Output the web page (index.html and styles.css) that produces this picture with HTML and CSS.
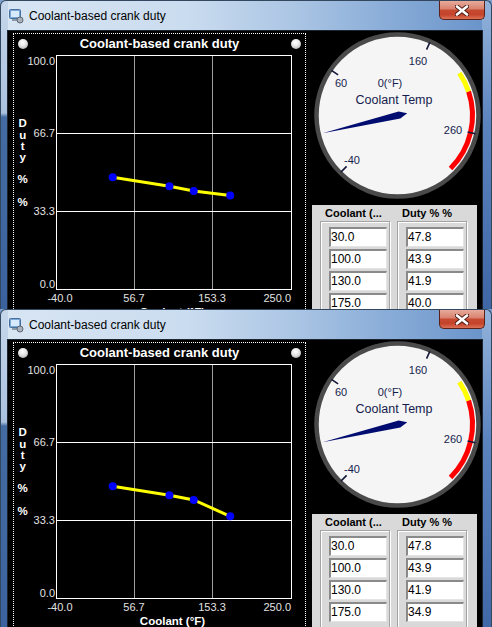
FILE: index.html
```html
<!DOCTYPE html>
<html>
<head>
<meta charset="utf-8">
<link rel="stylesheet" href="styles.css">
</head>
<body>
<div class="window w1">
  <div class="titlebar">
    <svg class="app-icon" width="16" height="16" viewBox="0 0 16 16">
      <rect x="1.5" y="1.5" width="11" height="9" rx="1" fill="#7aa6d8" stroke="#48709f"/>
      <rect x="3" y="3" width="8" height="6" fill="#d6eafc"/>
      <rect x="4" y="11" width="6" height="2" fill="#8c9aa8"/>
      <circle cx="12" cy="12" r="3" fill="#a9b2bc" stroke="#5f6872"/>
    </svg>
    <span class="title">Coolant-based crank duty</span>
    <div class="close">
      <svg width="14" height="11" viewBox="0 0 14 11">
        <path d="M2 1.5L12 9.5M12 1.5L2 9.5" stroke="#4a1a14" stroke-width="4.4" stroke-linecap="round"/>
        <path d="M2 1.5L12 9.5M12 1.5L2 9.5" stroke="#fff" stroke-width="2.6" stroke-linecap="round"/>
      </svg>
    </div>
  </div>
  <div class="client">
    <div class="panel">
      <div class="phead"><span class="knob"></span><span class="ctitle">Coolant-based crank duty</span><span class="knob"></span></div>
      <svg class="plot" width="290" height="280" viewBox="0 0 290 280">
        <line x1="120.5" y1="1" x2="120.5" y2="236" class="vgrid"/>
        <line x1="198.5" y1="1" x2="198.5" y2="236" class="vgrid"/>
        <line x1="42" y1="79.5" x2="278" y2="79.5" class="hgrid"/>
        <line x1="42" y1="157.5" x2="278" y2="157.5" class="hgrid"/>
        <rect x="42.5" y="1.5" width="235" height="234" class="frame"/>
        <text x="41" y="10.7" class="tick" text-anchor="end">100.0</text>
        <text x="41" y="83.3" class="tick" text-anchor="end">66.7</text>
        <text x="41" y="161.3" class="tick" text-anchor="end">33.3</text>
        <text x="41" y="234.3" class="tick" text-anchor="end">0.0</text>
        <text x="46" y="248" class="tick" text-anchor="middle">-40.0</text>
        <text x="120" y="248" class="tick" text-anchor="middle">56.7</text>
        <text x="198" y="248" class="tick" text-anchor="middle">153.3</text>
        <text x="277" y="248" class="tick" text-anchor="end">250.0</text>
        <text x="158.5" y="261.6" class="axis" text-anchor="middle">Coolant (°F)</text>
        <text x="8.7" y="73.3" class="axis" text-anchor="middle">D</text>
        <text x="8.7" y="84.5" class="axis" text-anchor="middle">u</text>
        <text x="8.7" y="95.7" class="axis" text-anchor="middle">t</text>
        <text x="8.7" y="106.9" class="axis" text-anchor="middle">y</text>
        <text x="8.7" y="129.3" class="axis" text-anchor="middle">%</text>
        <text x="8.7" y="151.7" class="axis" text-anchor="middle">%</text>
        <polyline points="98.72,123.15 155.45,132.27 179.76,136.95 216.22,141.4" class="curve"/>
        <circle cx="98.72" cy="123.15" r="4" class="pt"/>
        <circle cx="155.45" cy="132.27" r="4" class="pt"/>
        <circle cx="179.76" cy="136.95" r="4" class="pt"/>
        <circle cx="216.22" cy="141.4" r="4" class="pt"/>
      </svg>
    </div>
    <div class="side">
      <svg class="gauge" width="176" height="170" viewBox="0 0 176 170">
        <circle cx="91.5" cy="84.5" r="81" class="dial"/>
        <path d="M153.38 42.12A75 75 0 0 1 162.62 60.66" class="band-y"/>
        <path d="M162.62 60.66A75 75 0 0 1 144.53 137.53" class="band-r"/>
        <line x1="40.59" y1="135.41" x2="34.93" y2="141.07" class="gtick"/>
        <line x1="32.09" y1="43.82" x2="25.49" y2="39.3" class="gtick"/>
        <line x1="120.58" y1="18.63" x2="123.81" y2="11.32" class="gtick"/>
        <line x1="161.58" y1="100.99" x2="169.37" y2="102.82" class="gtick"/>
        <text x="112" y="34" class="glabel" text-anchor="middle">160</text>
        <text x="35" y="56" class="glabel" text-anchor="middle">60</text>
        <text x="147" y="103" class="glabel" text-anchor="middle">260</text>
        <text x="46" y="133" class="glabel" text-anchor="middle">-40</text>
        <text x="84" y="56" class="glabel" text-anchor="middle">0(°F)</text>
        <text x="88" y="72.5" class="gname" text-anchor="middle">Coolant Temp</text>
        <polygon points="16.55,102.13 92.6,80.6 101.23,82.21 94.3,87.5" class="needle"/>
      </svg>
      <div class="table">
        <div class="thead"><span>Coolant (...</span><span>Duty % %</span></div>
        <div class="cols">
          <div class="col">
            <div class="cell">30.0</div>
            <div class="cell">100.0</div>
            <div class="cell">130.0</div>
            <div class="cell">175.0</div>
          </div>
          <div class="col">
            <div class="cell">47.8</div>
            <div class="cell">43.9</div>
            <div class="cell">41.9</div>
            <div class="cell">40.0</div>
          </div>
        </div>
      </div>
    </div>
  </div>
</div>
<div class="window w2">
  <div class="titlebar">
    <svg class="app-icon" width="16" height="16" viewBox="0 0 16 16">
      <rect x="1.5" y="1.5" width="11" height="9" rx="1" fill="#7aa6d8" stroke="#48709f"/>
      <rect x="3" y="3" width="8" height="6" fill="#d6eafc"/>
      <rect x="4" y="11" width="6" height="2" fill="#8c9aa8"/>
      <circle cx="12" cy="12" r="3" fill="#a9b2bc" stroke="#5f6872"/>
    </svg>
    <span class="title">Coolant-based crank duty</span>
    <div class="close">
      <svg width="14" height="11" viewBox="0 0 14 11">
        <path d="M2 1.5L12 9.5M12 1.5L2 9.5" stroke="#4a1a14" stroke-width="4.4" stroke-linecap="round"/>
        <path d="M2 1.5L12 9.5M12 1.5L2 9.5" stroke="#fff" stroke-width="2.6" stroke-linecap="round"/>
      </svg>
    </div>
  </div>
  <div class="client">
    <div class="panel">
      <div class="phead"><span class="knob"></span><span class="ctitle">Coolant-based crank duty</span><span class="knob"></span></div>
      <svg class="plot" width="290" height="280" viewBox="0 0 290 280">
        <line x1="120.5" y1="1" x2="120.5" y2="236" class="vgrid"/>
        <line x1="198.5" y1="1" x2="198.5" y2="236" class="vgrid"/>
        <line x1="42" y1="79.5" x2="278" y2="79.5" class="hgrid"/>
        <line x1="42" y1="157.5" x2="278" y2="157.5" class="hgrid"/>
        <rect x="42.5" y="1.5" width="235" height="234" class="frame"/>
        <text x="41" y="10.7" class="tick" text-anchor="end">100.0</text>
        <text x="41" y="83.3" class="tick" text-anchor="end">66.7</text>
        <text x="41" y="161.3" class="tick" text-anchor="end">33.3</text>
        <text x="41" y="234.3" class="tick" text-anchor="end">0.0</text>
        <text x="46" y="248" class="tick" text-anchor="middle">-40.0</text>
        <text x="120" y="248" class="tick" text-anchor="middle">56.7</text>
        <text x="198" y="248" class="tick" text-anchor="middle">153.3</text>
        <text x="277" y="248" class="tick" text-anchor="end">250.0</text>
        <text x="158.5" y="261.6" class="axis" text-anchor="middle">Coolant (°F)</text>
        <text x="8.7" y="73.3" class="axis" text-anchor="middle">D</text>
        <text x="8.7" y="84.5" class="axis" text-anchor="middle">u</text>
        <text x="8.7" y="95.7" class="axis" text-anchor="middle">t</text>
        <text x="8.7" y="106.9" class="axis" text-anchor="middle">y</text>
        <text x="8.7" y="129.3" class="axis" text-anchor="middle">%</text>
        <text x="8.7" y="151.7" class="axis" text-anchor="middle">%</text>
        <polyline points="98.72,123.15 155.45,132.27 179.76,136.95 216.22,153.33" class="curve"/>
        <circle cx="98.72" cy="123.15" r="4" class="pt"/>
        <circle cx="155.45" cy="132.27" r="4" class="pt"/>
        <circle cx="179.76" cy="136.95" r="4" class="pt"/>
        <circle cx="216.22" cy="153.33" r="4" class="pt"/>
      </svg>
    </div>
    <div class="side">
      <svg class="gauge" width="176" height="170" viewBox="0 0 176 170">
        <circle cx="91.5" cy="84.5" r="81" class="dial"/>
        <path d="M153.38 42.12A75 75 0 0 1 162.62 60.66" class="band-y"/>
        <path d="M162.62 60.66A75 75 0 0 1 144.53 137.53" class="band-r"/>
        <line x1="40.59" y1="135.41" x2="34.93" y2="141.07" class="gtick"/>
        <line x1="32.09" y1="43.82" x2="25.49" y2="39.3" class="gtick"/>
        <line x1="120.58" y1="18.63" x2="123.81" y2="11.32" class="gtick"/>
        <line x1="161.58" y1="100.99" x2="169.37" y2="102.82" class="gtick"/>
        <text x="112" y="34" class="glabel" text-anchor="middle">160</text>
        <text x="35" y="56" class="glabel" text-anchor="middle">60</text>
        <text x="147" y="103" class="glabel" text-anchor="middle">260</text>
        <text x="46" y="133" class="glabel" text-anchor="middle">-40</text>
        <text x="84" y="56" class="glabel" text-anchor="middle">0(°F)</text>
        <text x="88" y="72.5" class="gname" text-anchor="middle">Coolant Temp</text>
        <polygon points="16.55,102.13 92.6,80.6 101.23,82.21 94.3,87.5" class="needle"/>
      </svg>
      <div class="table">
        <div class="thead"><span>Coolant (...</span><span>Duty % %</span></div>
        <div class="cols">
          <div class="col">
            <div class="cell">30.0</div>
            <div class="cell">100.0</div>
            <div class="cell">130.0</div>
            <div class="cell">175.0</div>
          </div>
          <div class="col">
            <div class="cell">47.8</div>
            <div class="cell">43.9</div>
            <div class="cell">41.9</div>
            <div class="cell">34.9</div>
          </div>
        </div>
      </div>
    </div>
  </div>
</div>
</body>
</html>
```
FILE: styles.css
```css
* { box-sizing: border-box; margin: 0; padding: 0; }
html, body { width: 492px; height: 627px; overflow: hidden; }
body { font-family: "Liberation Sans", Arial, sans-serif; background: #7b9fcf; }

.window {
  width: 492px;
  border: 1px solid #33475f;
  border-bottom: none;
  border-radius: 6px 6px 0 0;
  overflow: hidden;
  display: flex;
  flex-direction: column;
  background:
    linear-gradient(180deg, #c6d7eb 0, #aac1de 112px, #446ca3 116px, #3a629d 100%) 0 0 / 7px 100% no-repeat,
    linear-gradient(180deg, #93b3db 0, #5b83be 40%, #3f67a6 100%) 100% 0 / 9px 100% no-repeat,
    linear-gradient(90deg, #d8e5f3 0%, #cadcef 38%, #abc5e4 60%, #87abd7 80%, #6892c9 100%);
}
.w1 { height: 309px; }
.w2 { height: 330px; }

.titlebar {
  height: 29px;
  flex: none;
  display: flex;
  align-items: center;
  padding-left: 7px;
}
.app-icon { flex: none; }
.title {
  flex: 1;
  margin-left: 5px;
  font-size: 12px;
  color: #000;
  padding-top: 1px;
}
.close {
  align-self: flex-start;
  flex: none;
  width: 46px;
  height: 19px;
  margin-right: 6px;
  border: 1px solid #5b2018;
  border-top: none;
  border-radius: 0 0 5px 5px;
  background: linear-gradient(180deg, #e8aa9b 0%, #d98470 42%, #c64a30 52%, #c4432a 75%, #dc7156 100%);
  display: flex;
  align-items: center;
  justify-content: center;
}

.client {
  flex: 1;
  margin: 0 8px 0 6px;
  background: #000;
  border: 1px solid #1c2530;
  border-bottom: none;
  display: flex;
  overflow: hidden;
}

.panel {
  flex: none;
  width: 293px;
  height: 300px;
  margin: 2px 0 0 5px;
  border: 1px dotted #fff;
}
.phead {
  height: 19px;
  display: flex;
  align-items: center;
  padding: 0 4px 0 4px;
}
.knob {
  flex: none;
  width: 10px;
  height: 10px;
  border-radius: 50%;
  background: radial-gradient(circle at 45% 35%, #ffffff 0, #e8e8e8 40%, #9c9c9c 100%);
}
.ctitle {
  flex: 1;
  text-align: center;
  color: #fff;
  font-weight: bold;
  font-size: 13px;
}
.plot { display: block; margin-top: 1px; }
.vgrid { stroke: #a0a0a0; stroke-width: 1; }
.hgrid { stroke: #ffffff; stroke-width: 1; }
.frame { fill: none; stroke: #ffffff; stroke-width: 1; }
.tick { fill: #e2e2e2; font-size: 11px; font-family: "Liberation Sans", Arial, sans-serif; }
.axis { fill: #ffffff; font-size: 11.5px; font-weight: bold; font-family: "Liberation Sans", Arial, sans-serif; }
.curve { fill: none; stroke: #ffff00; stroke-width: 3; }
.pt { fill: #0000ff; }

.side {
  flex: none;
  width: 176px;
  display: flex;
  flex-direction: column;
}
.gauge { display: block; flex: none; }
.dial { fill: #f5f5f5; stroke: #4a4a4a; stroke-width: 4.5; }
.band-y { fill: none; stroke: #ffff00; stroke-width: 5; }
.band-r { fill: none; stroke: #ff0000; stroke-width: 5; }
.gtick { stroke: #141838; stroke-width: 1.6; }
.glabel { fill: #141c4e; font-size: 11px; font-family: "Liberation Sans", Arial, sans-serif; }
.gname { fill: #141c4e; font-size: 12.5px; font-family: "Liberation Sans", Arial, sans-serif; }
.needle { fill: #000c70; }

.table {
  flex: 1;
  margin: 4px 5px 0 6px;
  background: #d9d9d9;
  padding-left: 8px;
}
.thead {
  display: flex;
  height: 16px;
  align-items: center;
  font-weight: bold;
  font-size: 11px;
  color: #000;
}
.thead span:first-child { width: 77px; padding-left: 5px; }
.thead span:last-child { padding-left: 5px; }
.cols { display: flex; gap: 7px; }
.col {
  width: 70px;
  border: 1px solid #a3a3a3;
  box-shadow: inset 1px 1px 0 #fff, 1px 1px 0 #fff;
  padding: 5px 2px 3px 8px;
}
.cell {
  height: 20px;
  margin-bottom: 2px;
  background: #fff;
  border-top: 2px solid #8a8a8a;
  border-left: 2px solid #8a8a8a;
  border-right: 1px solid #e4e4e4;
  border-bottom: 1px solid #e4e4e4;
  font-size: 12px;
  line-height: 17px;
  color: #000;
}
```
